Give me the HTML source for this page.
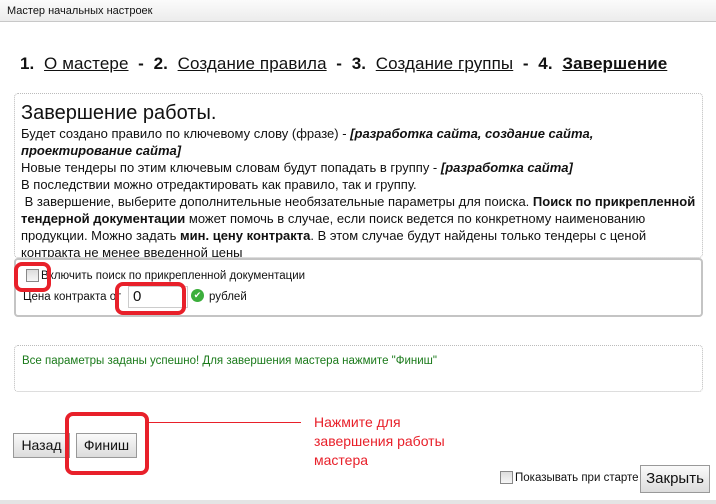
<!DOCTYPE html>
<html><head><meta charset="utf-8"><style>
body{margin:0;width:716px;height:504px;background:#fff;font-family:"Liberation Sans",sans-serif;position:relative;overflow:hidden;color:#111}
.tb{position:absolute;left:0;top:0;width:716px;height:22px;background:linear-gradient(#fbfbfb,#ececec);border-bottom:1px solid #c8c8c8;font-size:11px;line-height:22px;padding-left:7px;box-sizing:border-box}
.steps{position:absolute;left:20px;top:54px;font-size:17px;white-space:nowrap;letter-spacing:0.1px}
.box1{position:absolute;left:14px;top:93px;width:689px;height:165px;border:1px dotted #bbb;border-radius:4px;overflow:hidden;box-sizing:border-box;padding:7px 6px;font-size:13px;line-height:17px;white-space:nowrap}
.box1 h1{font-size:20px;font-weight:normal;margin:0;line-height:24px}
.box2{position:absolute;left:14px;top:258px;width:689px;height:59px;border:2px solid #c4c4c4;border-radius:4px;box-sizing:border-box;font-size:11.5px}
.box3{position:absolute;left:14px;top:345px;width:689px;height:47px;border:1px dotted #bbb;border-radius:4px;box-sizing:border-box;font-size:11.5px;color:#1a7a1a;padding:9px 7px}
.btn{position:absolute;border:1px solid #999;background:linear-gradient(#fafafa,#dcdcdc);font-size:13px;text-align:center;box-sizing:border-box}
.red{position:absolute;border:4px solid #e8202a;border-radius:8px;box-sizing:border-box}
</style></head><body>
<div class="tb">Мастер начальных настроек</div>
<div class="steps"><b>1.</b>&nbsp; <u>О мастере</u> &nbsp;<b>- &nbsp;2.</b>&nbsp; <u>Создание правила</u> &nbsp;<b>- &nbsp;3.</b>&nbsp; <u>Создание группы</u> &nbsp;<b>- &nbsp;4.&nbsp; <u>Завершение</u></b></div>
<div class="box1"><h1>Завершение работы.</h1>
Будет создано правило по ключевому слову (фразе) - <b><i>[разработка сайта, создание сайта,</i></b><br><b><i>проектирование сайта]</i></b><br>
Новые тендеры по этим ключевым словам будут попадать в группу - <b><i>[разработка сайта]</i></b><br>
В последствии можно отредактировать как правило, так и группу.<br>
&nbsp;В завершение, выберите дополнительные необязательные параметры для поиска. <b>Поиск по прикрепленной</b><br><b>тендерной документации</b> может помочь в случае, если поиск ведется по конкретному наименованию<br>продукции. Можно задать <b>мин. цену контракта</b>. В этом случае будут найдены только тендеры с ценой<br>контракта не менее введенной цены</div>
<div class="box2">
<div style="position:absolute;left:10px;top:9px;width:11px;height:11px;border:1px solid #888;background:linear-gradient(#ddd,#f6f6f6)"></div>
<div style="position:absolute;left:25px;top:10px">Включить поиск по прикрепленной документации</div>
<div style="position:absolute;left:7px;top:31px">Цена контракта от</div>
<div style="position:absolute;left:112px;top:26px;width:60px;height:22px;border:1px solid #ccc;font-size:15px;padding-left:4px;box-sizing:border-box;line-height:20px;background:#fff">0</div>
<div style="position:absolute;left:175px;top:29px;width:13px;height:13px;border-radius:50%;background:#3cae3c;color:#fff;font-size:9px;line-height:13px;text-align:center">✔</div>
<div style="position:absolute;left:193px;top:31px">рублей</div>
</div>
<div class="red" style="left:14px;top:262px;width:37px;height:30px"></div>
<div class="red" style="left:115px;top:282px;width:71px;height:33px"></div>
<div class="box3">Все параметры заданы успешно! Для завершения мастера нажмите "Финиш"</div>
<div class="btn" style="left:13px;top:433px;width:57px;height:25px;line-height:23px;font-size:14px">Назад</div>
<div class="btn" style="left:76px;top:433px;width:61px;height:25px;line-height:23px;font-size:14px">Финиш</div>
<div class="red" style="left:65px;top:412px;width:84px;height:63px"></div>
<div style="position:absolute;left:149px;top:422px;width:152px;height:1px;background:#e8202a"></div>
<div style="position:absolute;left:314px;top:413px;color:#e8202a;font-size:14px;line-height:19px">Нажмите для<br>завершения работы<br>мастера</div>
<div style="position:absolute;left:500px;top:471px;width:11px;height:11px;border:1px solid #888;background:linear-gradient(#ddd,#f6f6f6)"></div>
<div style="position:absolute;left:515px;top:472px;font-size:11.5px">Показывать при старте</div>
<div class="btn" style="left:640px;top:465px;width:70px;height:28px;line-height:26px;font-size:15px">Закрыть</div>
<div style="position:absolute;left:0;top:500px;width:716px;height:4px;background:#e4e4e4"></div>
</body></html>
